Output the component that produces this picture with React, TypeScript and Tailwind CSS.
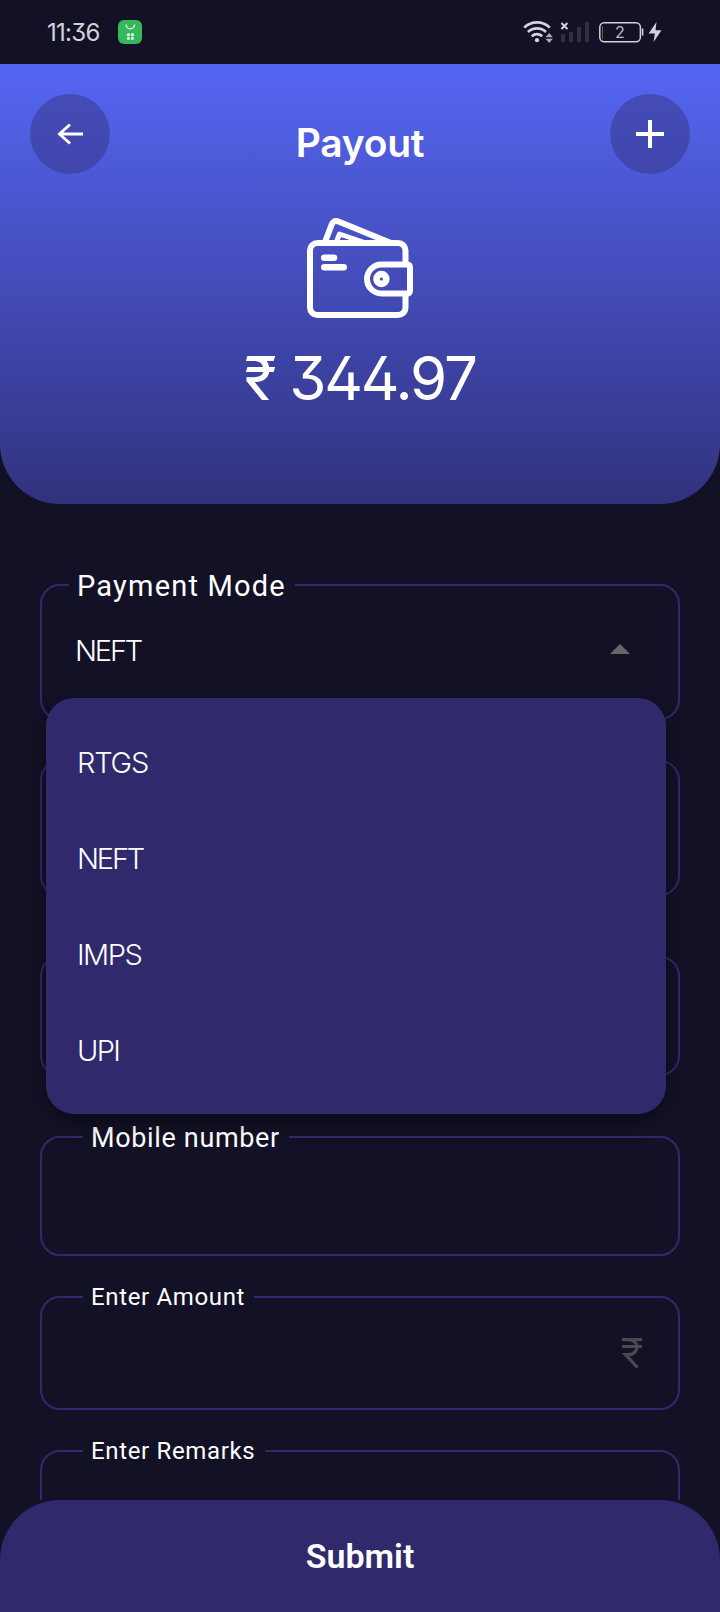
import { ReactNode } from "react";

type FieldProps = {
  label?: string;
  labelClass?: string;
  className: string;
  children?: ReactNode;
};

const modes = [
  { name: "RTGS", tracking: "tracking-[-1.2px]" },
  { name: "NEFT", tracking: "tracking-[-2.2px]" },
  { name: "IMPS", tracking: "tracking-[-1.5px]" },
  { name: "UPI", tracking: "tracking-[-1.7px]" },
];

const Field = ({ label, labelClass, className, children }: FieldProps) => {
  return (
    <div className={`relative shrink-0 rounded-[20px] border-2 border-[#302a6c] ${className}`}>
      {label && (
        <span
          className={`absolute flex h-9 items-center whitespace-nowrap bg-[#131126] pl-2 leading-none text-white ${labelClass}`}
        >
          {label}
        </span>
      )}
      {children}
    </div>
  );
};

const StatusBar = () => {
  return (
    <div className="flex h-16 shrink-0 items-center pl-[47px] pr-[57px] text-[#d2d1d8]">
      <span className="w-[71px] pt-0.5 text-[24px] leading-none tracking-[-0.7px] [font-feature-settings:'cv09']">
        11:36
      </span>
      <svg width="24" height="24" viewBox="0 0 24 24">
        <rect width="24" height="24" rx="6" fill="#36b85a" />
        <path d="M8 4.5a4.3 4.3 0 0 0 8.6 0" fill="none" stroke="#e4f7e9" strokeWidth="1.3" />
        <g fill="#d5f2dc">
          <circle cx="10.4" cy="14.7" r="1.7" />
          <circle cx="14.4" cy="14.7" r="1.7" />
          <circle cx="10.4" cy="18.4" r="1.6" />
          <circle cx="14.4" cy="18.4" r="1.6" />
        </g>
      </svg>
      <svg className="ml-auto" width="140" height="24" viewBox="0 0 140 24">
        <g fill="none" stroke="#d2d1d8" strokeWidth="2.7">
          <path d="M1.2 7.6a18.5 18.5 0 0 1 25.6 0" />
          <path d="M5 12a13 13 0 0 1 18 0" />
          <path d="M8.8 16.2a7.5 7.5 0 0 1 10.4 0" />
        </g>
        <circle cx="14" cy="20.2" r="2.1" fill="#d2d1d8" />
        <path d="M22.5 17.2 26.2 13l3.7 4.2zM22.5 18.8h7.4L26.2 23z" fill="#aaa9b4" />
        <path d="m38.4 3 6 6m0-6-6 6" stroke="#d2d1d8" strokeWidth="2" />
        <g fill="#302e42">
          <rect x="38" y="14" width="4" height="8" />
          <rect x="46" y="12" width="4" height="10" />
          <rect x="54" y="7" width="4" height="15" />
          <rect x="62" y="2" width="4" height="20" />
        </g>
        <rect x="76.8" y="2.8" width="40.6" height="19" rx="4.5" fill="none" stroke="#d2d1d8" strokeWidth="1.5" />
        <rect x="79" y="6" width="1" height="13" fill="#8a5a22" />
        <path d="M119.6 8.5v7" stroke="#d2d1d8" strokeWidth="1.6" />
        <text x="97" y="18" textAnchor="middle" fontSize="16" fill="#bdbcc5">
          2
        </text>
        <path d="M133.5 2 125.6 13.5h6.2L130.6 22l7.9-11.8h-6z" fill="#d2d1d8" />
      </svg>
    </div>
  );
};

const WalletIcon = () => {
  return (
    <svg width="108" height="102" viewBox="0 0 108 102" fill="none" stroke="#fff" strokeWidth="6">
      <rect x="4" y="25" width="95.500" height="72" rx="7.5" />
      <path d="m19 24 6.500-17q2-5.500 7-3.500L85 25" />
      <path d="m30 25 3.500-9L57 24" strokeWidth="5" strokeLinejoin="round" />
      <path d="M18.300 39.700H28M18.300 49.300h19.400" strokeWidth="6.600" strokeLinecap="round" />
      <path
        d="M75.500 46.500H101q3 0 3 3v23q0 3-3 3H75.500a14.500 14.500 0 0 1 0-29z"
        fill="#444bb8"
      />
      <circle cx="75.400" cy="61" r="4.900" strokeWidth="6.600" />
    </svg>
  );
};

const Header = () => {
  return (
    <header className="flex h-[440px] shrink-0 flex-col items-center rounded-b-[60px] bg-linear-to-b/srgb from-[#5566f3] to-[#31327d] text-white">
      <div className="flex w-full justify-between px-[30px] pt-[30px]">
        <button className="flex size-20 items-center justify-center rounded-full bg-[#302a6c]/40">
          <svg width="28" height="24" viewBox="0 0 28 24" fill="none" stroke="#fff" strokeWidth="2.9">
            <path d="M27 12H3.500M14 2.500 3.500 12 14 21.500" />
          </svg>
        </button>
        <h1 className="pt-[25px] text-[39px] font-semibold leading-[48px] tracking-[-0.3px]">Payout</h1>
        <button className="flex size-20 items-center justify-center rounded-full bg-[#302a6c]/40">
          <svg width="28" height="28" viewBox="0 0 28 28" stroke="#fff" strokeWidth="4">
            <path d="M14 0v28M0 14h28" />
          </svg>
        </button>
      </div>
      <div className="mt-11">
        <WalletIcon />
      </div>
      <p className="mt-[22px] text-[60px] font-normal leading-[72px] tracking-[-2.2px] [font-feature-settings:'cv02','cv09']">
        ₹ 344.97
      </p>
    </header>
  );
};

const ModeMenu = () => {
  return (
    <ul className="absolute left-1 top-[112px] z-10 w-[620px] rounded-[28px] bg-[#302a6c] py-4 shadow-[0_8px_20px_rgba(0,0,0,0.45)]">
      {modes.map((mode) => (
        <li
          key={mode.name}
          className={`flex h-24 items-center pl-[31px] pt-0.5 font-['Inter',sans-serif] text-[29px] font-light text-white ${mode.tracking}`}
        >
          {mode.name}
        </li>
      ))}
    </ul>
  );
};

const App = () => {
  return (
    <div className="flex h-[1612px] w-[720px] flex-col overflow-hidden bg-[#131126] font-['Inter',sans-serif]">
      <StatusBar />
      <Header />
      <main className="flex h-[996px] flex-col overflow-hidden px-10 pt-20 font-['Roboto',sans-serif]">
        <Field
          label="Payment Mode"
          labelClass="left-[27px] -top-[18px] w-[226px] text-[29px] tracking-[1.2px]"
          className="h-[136px]"
        >
          <div className="flex h-[130px] items-center justify-between pl-[33px] pr-12 font-['Inter',sans-serif] text-[29px] font-light tracking-[-2.2px] text-white">
            NEFT
            <svg className="mb-1" width="20" height="10" viewBox="0 0 20 10">
              <path d="M0 10 10 0l10 10z" fill="#66666a" />
            </svg>
          </div>
          <ModeMenu />
        </Field>
        <Field className="mt-10 h-[136px]" />
        <Field className="mt-[60px] h-[120px]" />
        <Field
          label="Mobile number"
          labelClass="left-[41px] -top-[18px] w-[206px] text-[27px] tracking-[0.65px]"
          className="mt-[60px] h-[120px]"
        />
        <Field
          label="Enter Amount"
          labelClass="left-[41px] -top-[19px] w-[171px] text-[24px] tracking-[0.65px]"
          className="mt-10 h-[114px]"
        >
          <div className="flex h-full items-center justify-end pr-9">
            <svg width="20" height="30" viewBox="0 0 20 30" fill="none" stroke="#4b4851" strokeWidth="3.2">
              <path d="M0 1.600h20M0 8.500h20M6 1.600c12 0 12 15 0 15H3.500L15.500 29.500" />
            </svg>
          </div>
        </Field>
        <Field
          label="Enter Remarks"
          labelClass="left-[41px] -top-[19px] w-[182px] text-[24px] tracking-[0.65px]"
          className="mt-10 h-[114px]"
        />
      </main>
      <button className="h-[112px] shrink-0 rounded-t-[60px] bg-[#302a6c] font-['Roboto',sans-serif] text-[34px] font-semibold text-white">
        Submit
      </button>
    </div>
  );
};

export default App;
